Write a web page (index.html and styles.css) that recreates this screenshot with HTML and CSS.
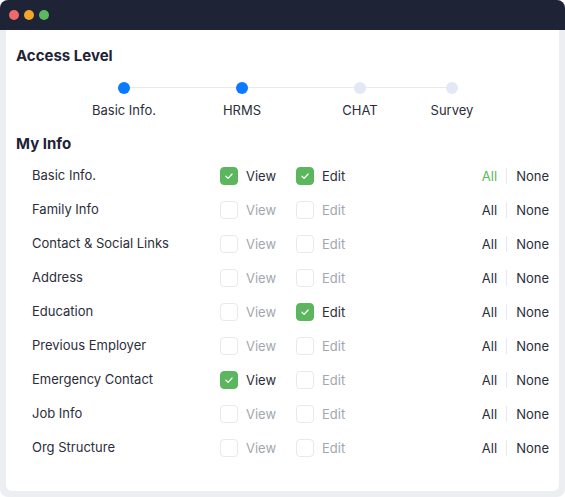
FILE: index.html
```html
<!DOCTYPE html>
<html>
<head>
<meta charset="utf-8">
<link rel="stylesheet" href="styles.css">
</head>
<body>
<div class="window">
  <div class="titlebar">
    <span class="dot red"></span><span class="dot yellow"></span><span class="dot green"></span>
  </div>
  <div class="card">
    <h2 class="title">Access Level</h2>
    <div class="stepper">
      <div class="step"><span class="sdot active"></span><span class="slabel">Basic Info.</span></div>
      <div class="step"><span class="sdot active"></span><span class="slabel">HRMS</span></div>
      <div class="step"><span class="sdot"></span><span class="slabel">CHAT</span></div>
      <div class="step"><span class="sdot"></span><span class="slabel">Survey</span></div>
    </div>
    <h2 class="title my">My Info</h2>
    <div class="rows">
      <div class="row">
        <span class="label">Basic Info.</span>
        <span class="opt on"><span class="cb"><svg viewBox="0 0 18 18"><polyline points="5.5,9.3 8,11.6 12.5,6.8"/></svg></span>View</span>
        <span class="opt on"><span class="cb"><svg viewBox="0 0 18 18"><polyline points="5.5,9.3 8,11.6 12.5,6.8"/></svg></span>Edit</span>
        <span class="allnone"><span class="all green-t">All</span><span class="sep"></span><span class="none">None</span></span>
      </div>
      <div class="row">
        <span class="label">Family Info</span>
        <span class="opt"><span class="cb"></span>View</span>
        <span class="opt"><span class="cb"></span>Edit</span>
        <span class="allnone"><span class="all">All</span><span class="sep"></span><span class="none">None</span></span>
      </div>
      <div class="row">
        <span class="label">Contact &amp; Social Links</span>
        <span class="opt"><span class="cb"></span>View</span>
        <span class="opt"><span class="cb"></span>Edit</span>
        <span class="allnone"><span class="all">All</span><span class="sep"></span><span class="none">None</span></span>
      </div>
      <div class="row">
        <span class="label">Address</span>
        <span class="opt"><span class="cb"></span>View</span>
        <span class="opt"><span class="cb"></span>Edit</span>
        <span class="allnone"><span class="all">All</span><span class="sep"></span><span class="none">None</span></span>
      </div>
      <div class="row">
        <span class="label">Education</span>
        <span class="opt"><span class="cb"></span>View</span>
        <span class="opt on"><span class="cb"><svg viewBox="0 0 18 18"><polyline points="5.5,9.3 8,11.6 12.5,6.8"/></svg></span>Edit</span>
        <span class="allnone"><span class="all">All</span><span class="sep"></span><span class="none">None</span></span>
      </div>
      <div class="row">
        <span class="label">Previous Employer</span>
        <span class="opt"><span class="cb"></span>View</span>
        <span class="opt"><span class="cb"></span>Edit</span>
        <span class="allnone"><span class="all">All</span><span class="sep"></span><span class="none">None</span></span>
      </div>
      <div class="row">
        <span class="label">Emergency Contact</span>
        <span class="opt on"><span class="cb"><svg viewBox="0 0 18 18"><polyline points="5.5,9.3 8,11.6 12.5,6.8"/></svg></span>View</span>
        <span class="opt"><span class="cb"></span>Edit</span>
        <span class="allnone"><span class="all">All</span><span class="sep"></span><span class="none">None</span></span>
      </div>
      <div class="row">
        <span class="label">Job Info</span>
        <span class="opt"><span class="cb"></span>View</span>
        <span class="opt"><span class="cb"></span>Edit</span>
        <span class="allnone"><span class="all">All</span><span class="sep"></span><span class="none">None</span></span>
      </div>
      <div class="row">
        <span class="label">Org Structure</span>
        <span class="opt"><span class="cb"></span>View</span>
        <span class="opt"><span class="cb"></span>Edit</span>
        <span class="allnone"><span class="all">All</span><span class="sep"></span><span class="none">None</span></span>
      </div>
    </div>
  </div>
</div>
</body>
</html>
```

FILE: styles.css
```css
* { box-sizing: border-box; }
html, body { margin: 0; padding: 0; background: #ffffff; }
body {
  font-family: "Inter", "Open Sans", sans-serif;
  color: #2b2e3a;
  width: 565px;
  height: 497px;
}
.window {
  width: 565px;
  height: 497px;
  background: #eceef2;
  border-radius: 8px;
  display: flex;
  flex-direction: column;
  overflow: hidden;
}
.titlebar {
  height: 30px;
  background: #1f2336;
  display: flex;
  align-items: center;
  gap: 5px;
  padding-left: 9px;
  flex-shrink: 0;
}
.dot {
  width: 10px;
  height: 10px;
  border-radius: 50%;
  display: block;
}
.dot.red { background: #ee6a6a; }
.dot.yellow { background: #f4a62a; }
.dot.green { background: #5db95f; }
.card {
  margin: 0 6px 6px 6px;
  flex: 1;
  background: #ffffff;
  border-radius: 0 0 6px 6px;
  padding: 16px 10px 0 10px;
}
.title {
  margin: 0;
  font-size: 15px;
  line-height: 20px;
  font-weight: 700;
  color: #1f2336;
}
.stepper {
  position: relative;
  display: grid;
  grid-template-columns: 118px 118px 118px 66px;
  margin-left: 49px;
  margin-top: 16px;
}
.stepper::before {
  content: "";
  position: absolute;
  top: 5px;
  left: 59px;
  width: 328px;
  height: 1px;
  background: #e6e9ef;
}
.step {
  display: flex;
  flex-direction: column;
  align-items: center;
  position: relative;
}
.sdot {
  width: 12px;
  height: 12px;
  border-radius: 50%;
  background: #e4e8f4;
  display: block;
}
.sdot.active { background: #0a7bff; }
.slabel {
  margin-top: 7px;
  font-size: 13px;
  line-height: 18px;
  color: #2b2e3a;
}
.title.my { margin-top: 15px; }
.rows {
  margin-top: 5px;
  display: flex;
  flex-direction: column;
}
.row {
  height: 34px;
  display: grid;
  grid-template-columns: 188px 76px 1fr auto;
  align-items: center;
  padding-left: 16px;
  font-size: 13px;
}
.label {
  color: #2b2e3a;
  margin-top: -2px;
}
.opt {
  display: flex;
  align-items: center;
  gap: 8px;
  color: #a3a6b0;
}
.opt.on { color: #2b2e3a; }
.cb {
  width: 18px;
  height: 18px;
  border-radius: 4px;
  border: 1px solid #e7e9ee;
  display: flex;
  align-items: center;
  justify-content: center;
}
.opt.on .cb {
  background: #5cb65e;
  border-color: #5cb65e;
}
.cb svg {
  width: 18px;
  height: 18px;
  fill: none;
  stroke: #ffffff;
  stroke-width: 1.4;
  stroke-linecap: round;
  stroke-linejoin: round;
}
.allnone {
  display: flex;
  align-items: center;
  color: #2b2e3a;
}
.green-t { color: #5cb65e; }
.sep {
  width: 1px;
  height: 16px;
  background: #e6e8ec;
  margin: 0 9px 0 9px;
}
```
